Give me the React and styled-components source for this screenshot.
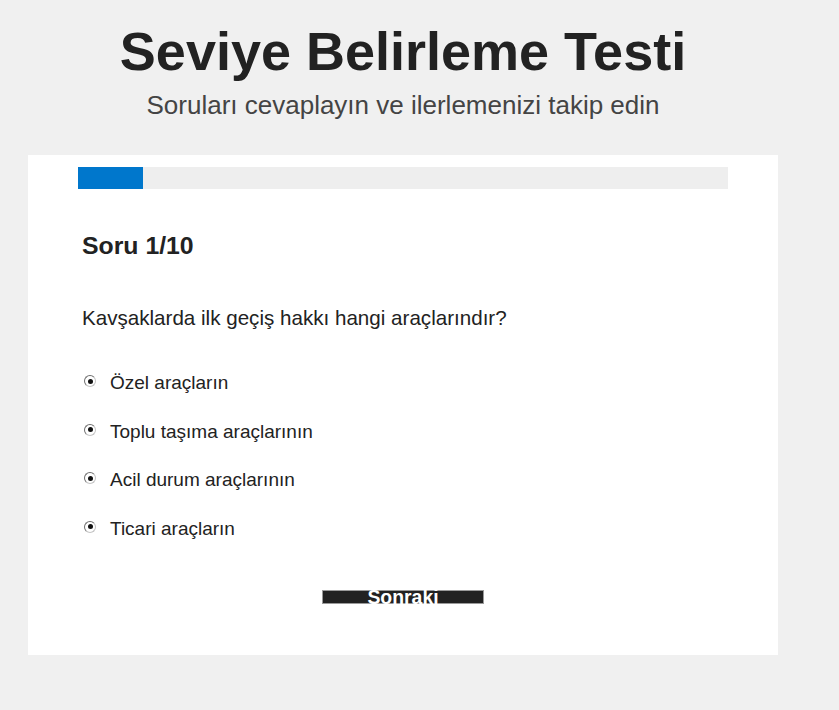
import React, { useState } from 'react';
import styled, { createGlobalStyle } from 'styled-components';

const GlobalStyle = createGlobalStyle`
  html, body {
    margin: 0;
    padding: 0;
    background: #f0f0f0;
  }
  body {
    font-family: "Liberation Sans", Arial, sans-serif;
    color: #222;
  }
`;

const Page = styled.div`
  padding: 20px 28px 0 28px;
  width: 750px;
`;

const Header = styled.header`
  text-align: center;
`;

const Title = styled.h1`
  margin: 0;
  font-size: 54px;
  font-weight: bold;
  color: #222;
  line-height: 1.15;
`;

const Subtitle = styled.p`
  margin: 9px 0 0 0;
  font-size: 26px;
  color: #444;
  line-height: 1.15;
`;

const Card = styled.main`
  margin-top: 34px;
  background: #fff;
  padding: 12px 50px 51px 50px;
`;

const Track = styled.div`
  height: 22px;
  background: #eee;
`;

const Fill = styled.div`
  height: 100%;
  background: #0077cc;
`;

const Question = styled.section`
  padding-left: 4px;
`;

const Counter = styled.h2`
  margin: 43px 0 0 0;
  font-size: 24.8px;
  font-weight: bold;
  line-height: 1.15;
`;

const Prompt = styled.p`
  margin: 45px 0 0 0;
  font-size: 20.6px;
  line-height: 1.15;
`;

const Options = styled.ul`
  list-style: none;
  margin: 43px 0 0 0;
  padding: 0;
  display: flex;
  flex-direction: column;
  gap: 26.65px;
`;

const Option = styled.li`
  display: flex;
  align-items: flex-start;
  gap: 14px;
  padding-left: 2px;
  font-size: 19px;
  line-height: 1.15;
  cursor: pointer;
`;

const Radio = styled.span`
  flex: none;
  box-sizing: border-box;
  width: 12px;
  height: 12px;
  margin-top: 3px;
  border-radius: 50%;
  border: 1px solid #c4c4c4;
  border-top-color: #6f6f6f;
  border-left-color: #6f6f6f;
  background: #fff;
  display: flex;
  align-items: center;
  justify-content: center;

  &::after {
    content: '';
    width: 5px;
    height: 5px;
    border-radius: 50%;
    background: #111;
  }
`;

const Actions = styled.div`
  margin-top: 51px;
  display: flex;
  justify-content: center;
`;

const NextButton = styled.button`
  box-sizing: border-box;
  width: 162px;
  height: 14px;
  padding: 0;
  border: 1px solid #9a9a9a;
  background: #222;
  color: #fff;
  font-family: "Liberation Sans", Arial, sans-serif;
  font-size: 19.4px;
  font-weight: bold;
  line-height: 12px;
  overflow: visible;
  cursor: pointer;
`;

const answers = [
  'Özel araçların',
  'Toplu taşıma araçlarının',
  'Acil durum araçlarının',
  'Ticari araçların',
];

export default function App() {
  const [current] = useState(1);
  const total = 10;

  return (
    <>
      <GlobalStyle />
      <Page>
        <Header>
          <Title>Seviye Belirleme Testi</Title>
          <Subtitle>Soruları cevaplayın ve ilerlemenizi takip edin</Subtitle>
        </Header>
        <Card>
          <Track>
            <Fill style={{ width: `${(current / total) * 100}%` }} />
          </Track>
          <Question>
            <Counter>Soru {current}/{total}</Counter>
            <Prompt>Kavşaklarda ilk geçiş hakkı hangi araçlarındır?</Prompt>
            <Options>
              {answers.map((a) => (
                <Option key={a}>
                  <Radio />
                  <span>{a}</span>
                </Option>
              ))}
            </Options>
          </Question>
          <Actions>
            <NextButton>Sonraki</NextButton>
          </Actions>
        </Card>
      </Page>
    </>
  );
}
